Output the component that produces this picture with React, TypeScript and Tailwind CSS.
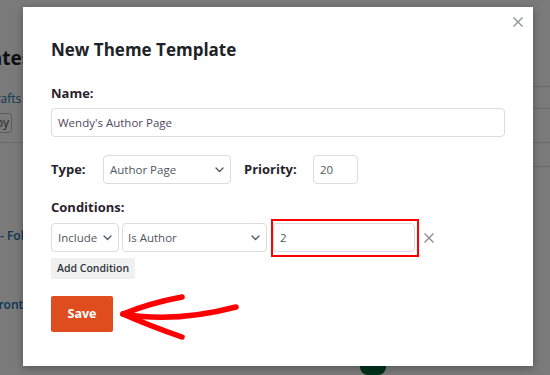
import React from "react";

function Chevron({ className = "" }: { className?: string }) {
  return (
    <svg className={className} width="9" height="6" viewBox="0 0 9 6" fill="none">
      <path d="M1 1l3.5 3.5L8 1" stroke="#50575e" strokeWidth="1.3" strokeLinecap="round" strokeLinejoin="round" />
    </svg>
  );
}

function XIcon({ size = 10, color = "#8c8f94", sw = 1.4 }: { size?: number; color?: string; sw?: number }) {
  return (
    <svg width={size} height={size} viewBox="0 0 10 10" fill="none">
      <path d="M0.5 0.5l9 9M9.5 0.5l-9 9" stroke={color} strokeWidth={sw} />
    </svg>
  );
}

export default function App() {
  return (
    <div
      className="relative w-[550px] h-[375px] overflow-hidden bg-white"
      style={{ fontFamily: '"Open Sans", "Noto Sans", sans-serif' }}
    >
      {/* background page */}
      <div className="flex flex-col w-full h-full text-[#1d2327]">
        <div className="flex h-[364px]">
          <div className="w-[60px] flex flex-col">
            <div className="mt-[46px] h-[24px] flex items-center whitespace-nowrap">
              <span className="text-[19px] font-bold ml-[-68px]">Templates</span>
            </div>
            <div className="mt-[22px] h-[14px] flex items-center whitespace-nowrap">
              <span className="text-[12px] text-[#2271b1] ml-[-13px]">Drafts</span>
            </div>
            <div className="mt-[7px] ml-[-30px] h-[20px] w-[42px] border border-[#c3c4c7] rounded-[3px] text-[12px] flex items-center justify-end pr-[2px] text-[#50575e]">
              by
            </div>
            <div className="mt-[9px] border-t border-[#dcdcde]" />
            <div className="mt-[83px] h-[20px] flex items-center whitespace-nowrap">
              <span className="text-[12px] font-semibold text-[#2271b1] ml-[0px]">- Follow</span>
            </div>
            <div className="mt-[49px] h-[20px] flex items-center whitespace-nowrap">
              <span className="text-[12px] font-semibold text-[#2271b1] ml-[-8px]">Frontpage</span>
            </div>
          </div>
          <div className="flex-1" />
          <div className="w-[60px] flex flex-col">
            <div className="mt-[86px] border-t border-[#dcdcde]" />
            <div className="mt-[21px] border-t border-[#dcdcde]" />
            <div className="mt-[33px] border-t border-[#dcdcde]" />
            <div className="h-[23px] flex items-center whitespace-nowrap">
              <span className="text-[13px] text-[#50575e] ml-[-32px]">Priority</span>
            </div>
            <div className="border-t border-[#dcdcde]" />
          </div>
        </div>
        <div className="flex pl-[360px]">
          <div className="w-[26px] h-[20px] rounded-[8px] bg-[#00693a]" />
        </div>
      </div>

      {/* overlay */}
      <div className="absolute inset-0 bg-black/[0.52]" />

      {/* modal */}
      <div className="absolute left-[23px] top-[7px] w-[510px] h-[359px] bg-white shadow-[0_2px_8px_rgba(0,0,0,0.3)] pt-[31px] px-[28px]">
        <button className="absolute right-[10px] top-[10px]">
          <XIcon size={10} color="#8c8f94" sw={1.3} />
        </button>

        <h1 className="text-[17px] leading-[24px] font-bold text-[#1d2327]">New Theme Template</h1>

        <div className="mt-[21px] text-[13px] leading-[20px] font-bold text-[#2a1f2d]">Name:</div>
        <div className="mt-[5px] h-[29px] w-[454px] border border-[#dcdcde] rounded-[4px] flex items-center px-[6px] text-[11.5px] text-[#50485a]">
          Wendy's Author Page
        </div>

        <div className="mt-[18px] flex items-center h-[29px]">
          <span className="w-[52px] text-[13px] font-bold text-[#2a1f2d]">Type:</span>
          <div className="w-[128px] h-[29px] border border-[#dcdcde] rounded-[4px] flex items-center justify-between pl-[6px] pr-[6px] text-[11.5px] text-[#50575e]">
            <span>Author Page</span>
            <Chevron />
          </div>
          <span className="ml-[13px] w-[69px] text-[13px] font-bold text-[#2a1f2d]">Priority:</span>
          <div className="w-[45px] h-[29px] border border-[#dcdcde] rounded-[4px] flex items-center px-[6px] text-[11.5px] text-[#50575e]">
            20
          </div>
        </div>

        <div className="mt-[13px] text-[13px] leading-[20px] font-bold text-[#2a1f2d]">Conditions:</div>

        <div className="mt-[6px] flex items-center h-[29px]">
          <div className="w-[68px] h-[29px] border border-[#dcdcde] rounded-[4px] flex items-center justify-between pl-[6px] pr-[6px] text-[11.5px] text-[#50575e]">
            <span>Include</span>
            <Chevron />
          </div>
          <div className="ml-[3px] w-[145px] h-[29px] border border-[#dcdcde] rounded-[4px] flex items-center justify-between pl-[5px] pr-[6px] text-[11.5px] text-[#50575e]">
            <span>Is Author</span>
            <Chevron />
          </div>
          <div className="relative ml-[6px] w-[142px] h-[29px]">
            <div className="w-full h-full border border-[#dcdcde] rounded-[4px] flex items-center px-[6px] text-[11.5px] text-[#50575e]">2</div>
            <div className="absolute left-[-2px] top-[-4px] right-[-4px] bottom-[-5px] border-2 border-[#ff0000]" />
          </div>
          <div className="ml-[9px] flex items-center">
            <XIcon size={10} color="#8c8f94" sw={1.4} />
          </div>
        </div>

        <button className="mt-[6px] h-[21px] px-[6px] bg-[#f0f0f1] rounded-[2px] text-[10.5px] font-semibold text-[#2c3338] flex items-center">
          Add Condition
        </button>

        <button className="mt-[17px] w-[62px] h-[36px] bg-[#df4d1f] rounded-[2px] text-[12.5px] font-bold text-white flex items-center justify-center">
          Save
        </button>
      </div>

      {/* annotation arrow */}
      <svg className="absolute left-0 top-0" width="550" height="375" viewBox="0 0 550 375" fill="none">
        <path d="M123 314 Q175 323 236 307" stroke="#ff0000" strokeWidth="5.5" strokeLinecap="round" />
        <path d="M123 314 Q150 303 182 297" stroke="#ff0000" strokeWidth="5.5" strokeLinecap="round" />
        <path d="M123 314 Q150 326 182 337" stroke="#ff0000" strokeWidth="5.5" strokeLinecap="round" />
      </svg>
    </div>
  );
}
